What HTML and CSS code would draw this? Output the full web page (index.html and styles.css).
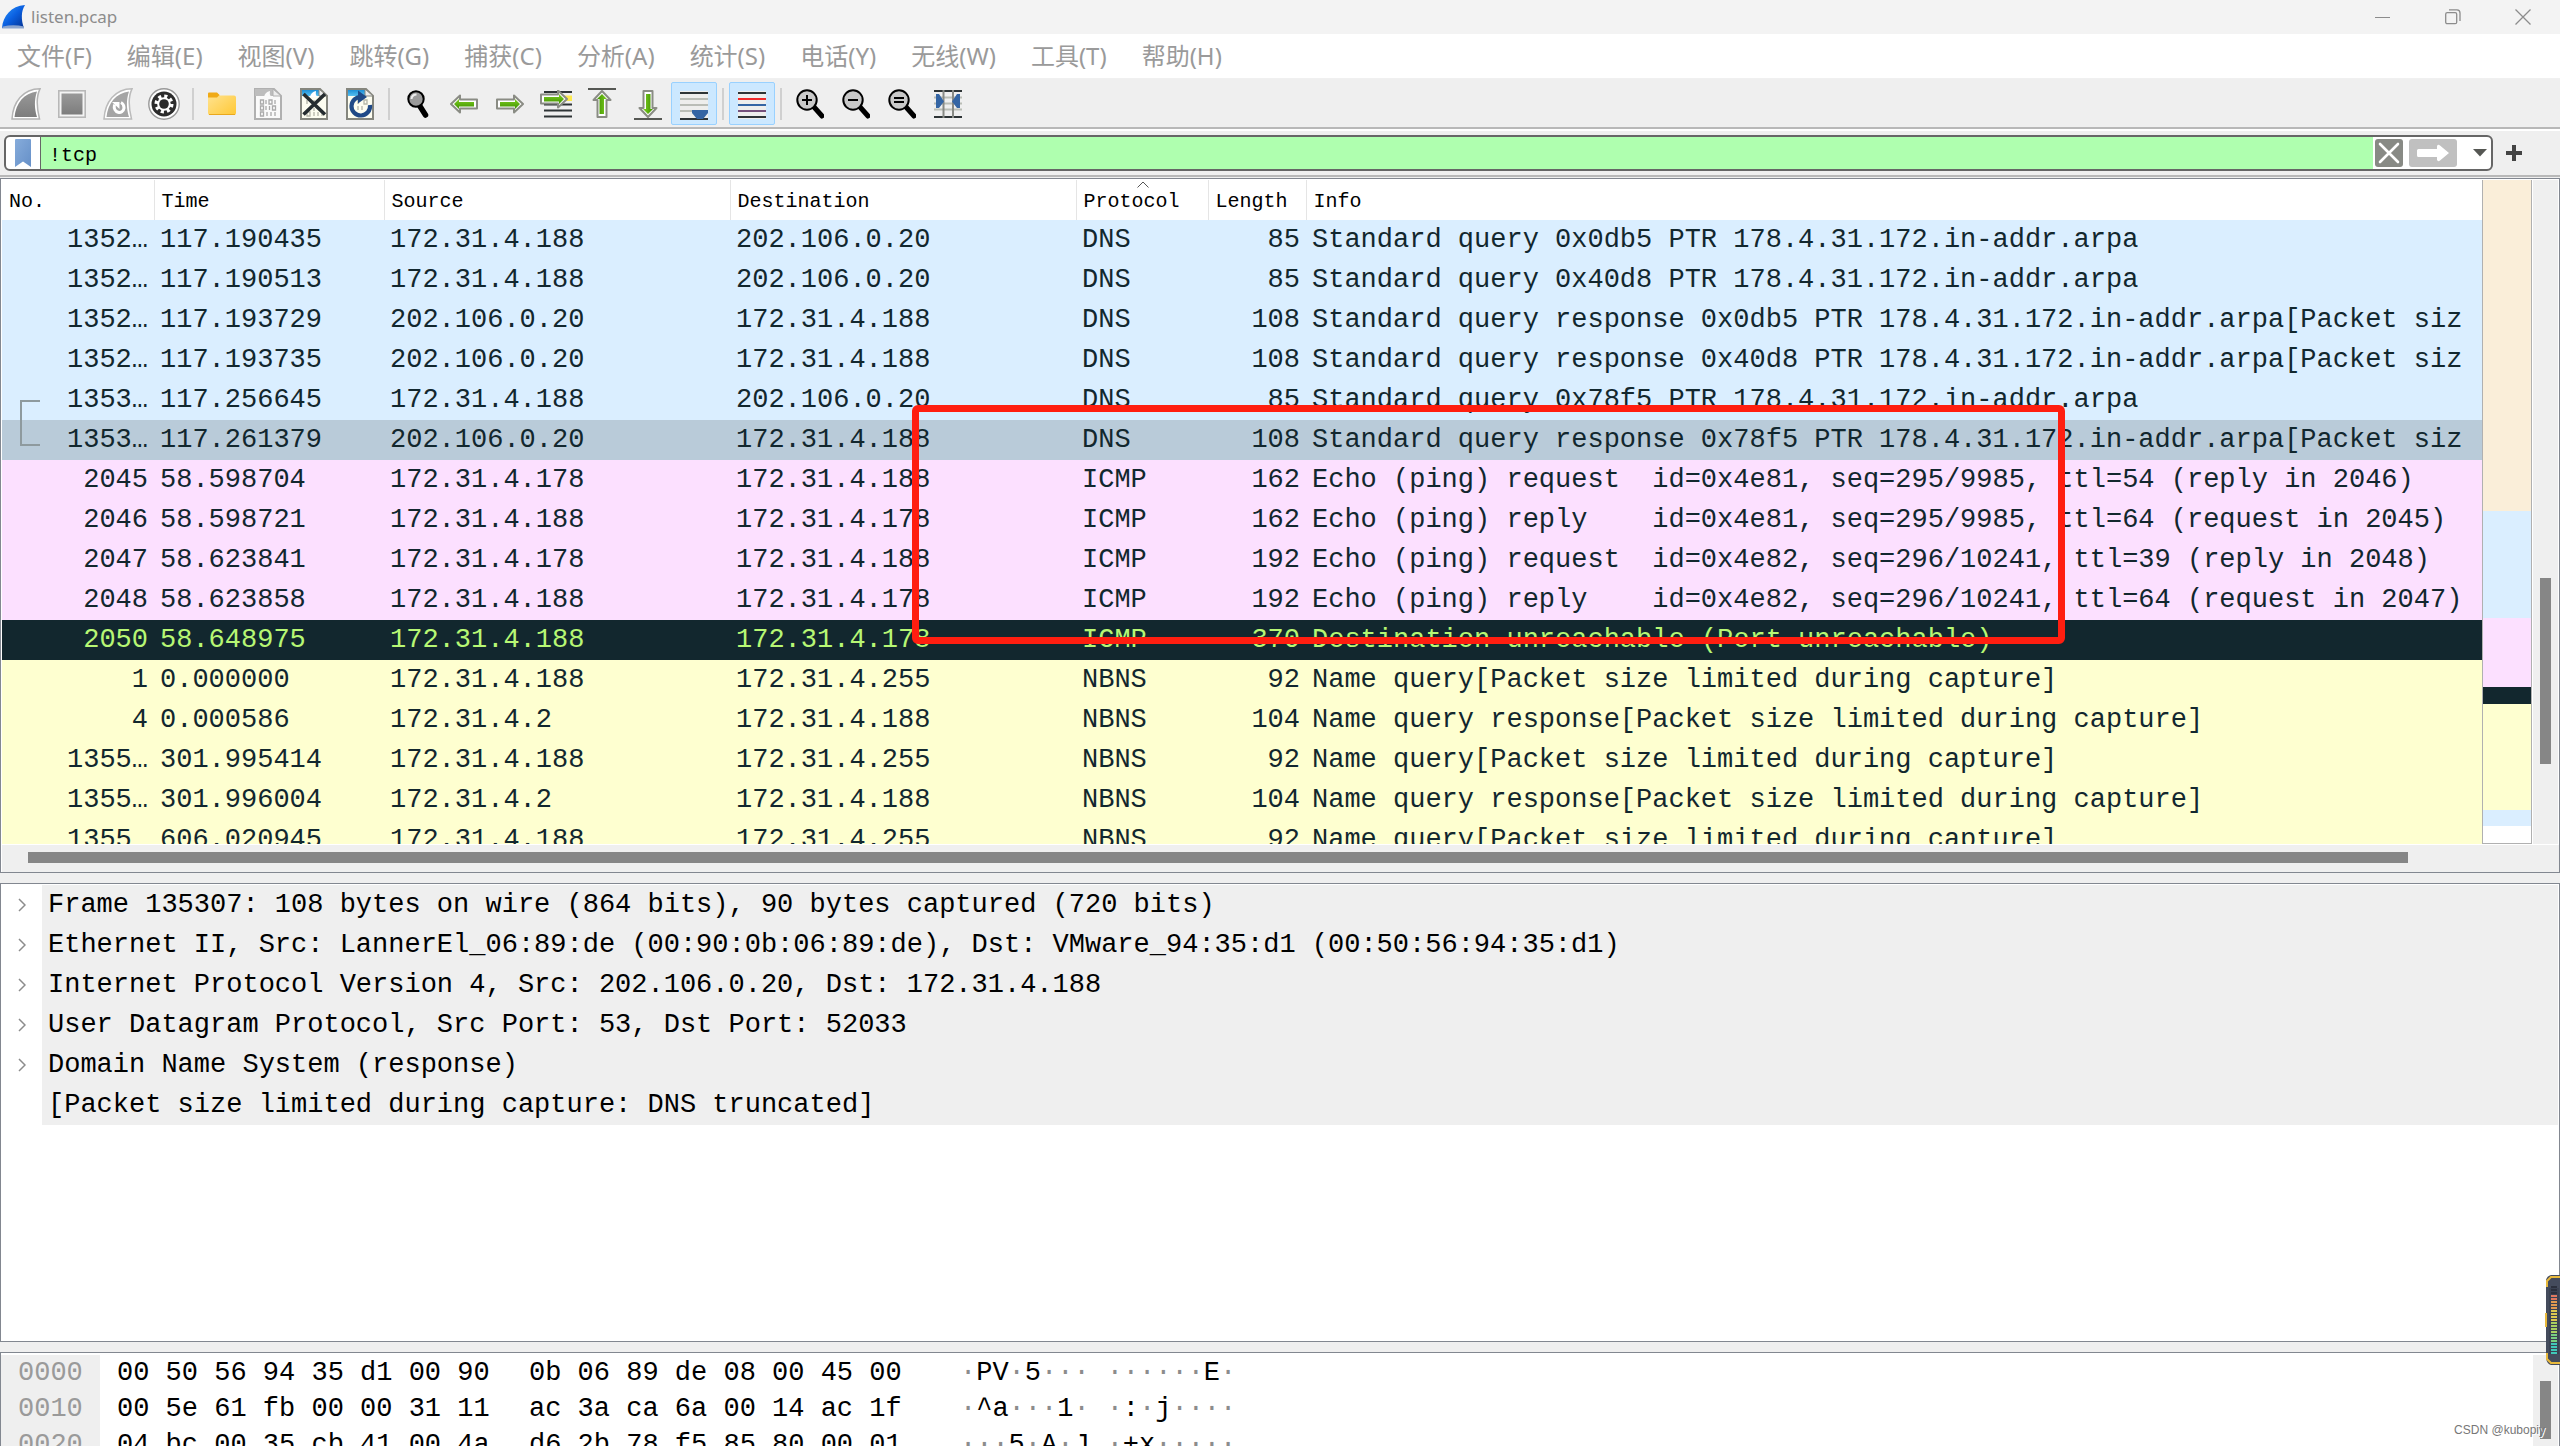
FILE: index.html
```html
<!DOCTYPE html>
<html lang="zh-CN">
<head>
<meta charset="utf-8">
<title>listen.pcap</title>
<link rel="stylesheet" href="styles.css">
</head>
<body>
<svg class="defs" width="0" height="0" aria-hidden="true">
  <defs>
    <linearGradient id="g-blue" x1="0" y1="0" x2="1" y2="1"><stop offset="0" stop-color="#2f9bff"/><stop offset=".5" stop-color="#0a5fe0"/><stop offset="1" stop-color="#04308f"/></linearGradient>
    <linearGradient id="g-grey" x1="0" y1="0" x2="0" y2="1"><stop offset="0" stop-color="#999"/><stop offset="1" stop-color="#7d7d7d"/></linearGradient>
    <linearGradient id="g-folder" x1="0" y1="0" x2="1" y2="1"><stop offset="0" stop-color="#ffe494"/><stop offset="1" stop-color="#ffc835"/></linearGradient>
    <linearGradient id="g-green" x1="0" y1="0" x2="0" y2="1"><stop offset="0" stop-color="#7fd022"/><stop offset="1" stop-color="#3f9000"/></linearGradient>
    <linearGradient id="g-mark" x1="0" y1="0" x2="1" y2="1"><stop offset="0" stop-color="#86acdb"/><stop offset="1" stop-color="#6690c8"/></linearGradient>
    <linearGradient id="g-sky" x1="0" y1="0" x2="0" y2="1"><stop offset="0" stop-color="#1d8fd6"/><stop offset="1" stop-color="#58c0f0"/></linearGradient>
    <symbol id="arrow" viewBox="0 0 28 20">
      <path d="M1 10 L10 1.500 V5.500 H27 V14.500 H10 V18.500 Z" fill="#fff" stroke="#8a8c84" stroke-width="2" stroke-linejoin="round"/>
      <path d="M4 10 L9 5 V8 H24 V12.500 H9 V15 Z" fill="url(#g-green)"/>
    </symbol>
    <symbol id="lens" viewBox="0 0 28 30">
      <path d="M18 18 L26 27" stroke="#000" stroke-width="5" stroke-linecap="round"/>
      <circle cx="11" cy="11" r="9.700" fill="#c8c8c8" stroke="#000" stroke-width="2"/>
    </symbol>
  </defs>
</svg>

<header class="titlebar">
  <svg class="app-icon" width="24" height="24" viewBox="0 0 24 24" aria-hidden="true"><path d="M0 23 C1 11 9 1 23 0 C19 6 19 15 22 23 Z" fill="url(#g-blue)"/><path d="M1 21.500 Q11 19 22 21.500 V23.500 H0 Z" fill="#8ba5cf"/></svg>
  <span class="title">listen.pcap</span>
  <div class="window-buttons">
    <button type="button" aria-label="最小化"><svg width="16" height="16" viewBox="0 0 16 16"><path d="M0 8.500 H15" stroke="#8c8c8c"/></svg></button>
    <button type="button" aria-label="还原"><svg width="16" height="16" viewBox="0 0 16 16" fill="none" stroke="#8c8c8c" stroke-width="1.300"><rect x=".7" y="3.700" width="11" height="11" rx="1.500"/><path d="M4 .8 H12 Q15 .8 15 4 V12"/></svg></button>
    <button type="button" aria-label="关闭"><svg width="16" height="16" viewBox="0 0 16 16"><path d="M.5 .5 L15.500 15.500 M15.500 .5 L.5 15.500" stroke="#8c8c8c" stroke-width="1.300"/></svg></button>
  </div>
</header>

<nav class="menubar">
  <button type="button">文件(F)</button>
  <button type="button">编辑(E)</button>
  <button type="button">视图(V)</button>
  <button type="button">跳转(G)</button>
  <button type="button">捕获(C)</button>
  <button type="button">分析(A)</button>
  <button type="button">统计(S)</button>
  <button type="button">电话(Y)</button>
  <button type="button">无线(W)</button>
  <button type="button">工具(T)</button>
  <button type="button">帮助(H)</button>
</nav>

<div class="toolbar" role="toolbar">
  <button type="button" aria-label="开始捕获"><svg width="30" height="32" viewBox="0 0 30 32"><path d="M1 31 C2 14 12 1 29 .8 C25 9 26 21 28.500 31 Z" fill="#fff" stroke="#b4b4b4" stroke-width="1.500"/><path d="M3.500 29 C5 15 13 5 26 3.500 C23 12 23.500 21 26 29 Z" fill="url(#g-grey)"/></svg></button>
  <button type="button" aria-label="停止捕获"><svg width="28" height="28" viewBox="0 0 28 28"><rect x=".8" y=".8" width="26.400" height="26.400" fill="#f4f4f4" stroke="#b8b8b8" stroke-width="1.600"/><rect x="3.500" y="3.500" width="21" height="21" fill="url(#g-grey)"/></svg></button>
  <button type="button" aria-label="重新开始"><svg width="30" height="32" viewBox="0 0 30 32"><path d="M1 31 C2 14 12 1 29 .8 C25 9 26 21 28.500 31 Z" fill="#fff" stroke="#bbb" stroke-width="1.500"/><path d="M3.500 29 C5 15 13 5 26 3.500 C23 12 23.500 21 26 29 Z" fill="#a5a5a5"/><path d="M11.500 16.500 C9.500 25 20 27.500 21 20 C21 17 20 15.500 18 14.500" fill="none" stroke="#fff" stroke-width="3"/><path d="M9 14 H16.500 V21 Z" fill="#fff"/></svg></button>
  <button type="button" aria-label="捕获选项"><svg width="32" height="32" viewBox="0 0 32 32"><circle cx="16" cy="16" r="15.200" fill="#fff" stroke="#999" stroke-width="1.400"/><circle cx="16" cy="16" r="12.500" fill="#2c2c2c"/><circle cx="16" cy="16" r="7.500" fill="none" stroke="#fff" stroke-width="4" stroke-dasharray="3 2.890"/><circle cx="16" cy="16" r="6.800" fill="#fff"/><circle cx="16" cy="16" r="4.800" fill="#2c2c2c"/></svg></button>
  <span class="sep"></span>
  <button type="button" aria-label="打开"><svg width="28" height="24" viewBox="0 0 28 24"><path d="M0 2 Q0 1 1 1 H9 L12 3.500 H26 Q28 3.500 28 5.500 V21 Q28 23 26 23 H2 Q0 23 0 21 Z" fill="url(#g-folder)"/><path d="M0 5 V1.500 Q0 .5 1 .5 H9 L11.500 3 L9 5.500 H0 Z" fill="#f0aa16"/><path d="M1 22.500 H27" stroke="#e9a81e"/></svg></button>
  <button type="button" aria-label="保存"><svg width="28" height="32" viewBox="0 0 28 32"><path d="M1 1 H20 L27 8 V31 H1 Z" fill="#fafafa" stroke="#b0b0b0" stroke-width="2"/><path d="M1 1 H20 L23 8 H1 Z" fill="#bdbdbd"/><path d="M10 9 Q11 4 16 3 Q15 6 17 9 Z" fill="#fafafa"/><path d="M19 1 V8 H27 Z" fill="#eee" stroke="#b0b0b0"/><g fill="none" stroke="#aaa" stroke-width="1.300"><path d="M6.500 12 h3 v4 h-3 z M12 12 v4 M15 12 h3 v4 h-3 z M21 12 v4 M6.500 18 h3 v4 h-3 z M12 18 v4 M15.500 18 v4 M18.500 18 h3 v4 h-3 z M6.500 24 h3 v4 h-3 z M13 24 v4 M17 24 v4 M21 24 v4"/></g></svg></button>
  <button type="button" aria-label="关闭文件"><svg width="28" height="32" viewBox="0 0 28 32"><path d="M1 1 H20 L27 8 V31 H1 Z" fill="#fdfdf0" stroke="#85867e" stroke-width="2"/><path d="M2 2 H20 L23 8 H2 Z" fill="url(#g-sky)"/><path d="M10 9 Q11 4 16 3 Q15 6 17 9 Z" fill="#fff"/><path d="M19 1 V8 H27 Z" fill="#eee" stroke="#85867e"/><path d="M7 24 h3 v4 h-3 z M14 24 v4 M18 24 v4 M22 24 v4 M7 12 v4 M14 12 v3 M14 20 v3" fill="none" stroke="#b5b6a8" stroke-width="1.300"/><path d="M3.500 6 L25 26.500 M25 6 L3.500 26.500" stroke="#262d30" stroke-width="3.600"/></svg></button>
  <button type="button" aria-label="重新加载"><svg width="28" height="32" viewBox="0 0 28 32"><path d="M1 1 H20 L27 8 V31 H1 Z" fill="#fdfdf0" stroke="#85867e" stroke-width="2"/><path d="M2 2 H20 L23 8 H2 Z" fill="url(#g-sky)"/><path d="M19 1 V8 H27 Z" fill="#eee" stroke="#85867e"/><path d="M7 12 v4 M12 12 v4 M18 12 h3 v4 h-3 z M12 18 v4 M16 18 v4" fill="none" stroke="#b5b6a8" stroke-width="1.300"/><path d="M16 9 A9.300 9.300 0 1 0 24 17" fill="none" stroke="#204a87" stroke-width="4.200"/><path d="M12 2.500 L21 9 L12 15.500 Z" fill="#204a87"/></svg></button>
  <span class="sep"></span>
  <button type="button" aria-label="查找分组"><svg width="22" height="28" viewBox="0 0 22 28"><path d="M12.500 15.500 L18.500 25" stroke="#000" stroke-width="5.500" stroke-linecap="round"/><circle cx="9" cy="9" r="7.700" fill="#9b9b9b" stroke="#000" stroke-width="2"/><path d="M4.500 9 Q5 4.500 9.500 4.500" fill="none" stroke="#eee" stroke-width="2"/></svg></button>
  <button type="button" aria-label="上一分组"><svg width="28" height="20"><use href="#arrow"/></svg></button>
  <button type="button" aria-label="下一分组"><svg width="28" height="20" viewBox="0 0 28 20"><use href="#arrow" width="28" height="20" transform="matrix(-1 0 0 1 28 0)"/></svg></button>
  <button type="button" aria-label="转到分组"><svg width="32" height="28" viewBox="0 0 32 28"><path d="M4 2 H32 M4 14.500 H32 M4 20.500 H32 M4 26.500 H32" stroke="#2e3436" stroke-width="2"/><path d="M20 5.500 H32 V11 H20 Z" fill="#fce94f"/><use href="#arrow" width="28" height="20" transform="matrix(-1 0 0 1 28 -1)"/></svg></button>
  <button type="button" aria-label="首个分组"><svg width="28" height="32" viewBox="0 0 28 32"><path d="M0 1 H28" stroke="#555753" stroke-width="2"/><use href="#arrow" width="28" height="20" transform="matrix(0 1 -1 0 24 2)"/></svg></button>
  <button type="button" aria-label="最新分组"><svg width="28" height="32" viewBox="0 0 28 32"><path d="M0 31 H28" stroke="#555753" stroke-width="2"/><use href="#arrow" width="28" height="20" transform="matrix(0 -1 1 0 4 30)"/></svg></button>
  <button type="button" class="checked" aria-pressed="true" aria-label="自动滚动"><svg width="28" height="32" viewBox="0 0 28 32"><rect y="3" width="28" height="28" fill="#eeeeec"/><path d="M0 5 H28 M0 31 H28" stroke="#2e3436" stroke-width="2"/><path d="M0 11 H28 M0 17 H28 M0 23 H28" stroke="#babdb6" stroke-width="2"/><path d="M12 22 H28 V25 L23 31 H17 L12 25 Z" fill="#3465a4"/></svg></button>
  <span class="sep"></span>
  <button type="button" class="checked" aria-pressed="true" aria-label="着色"><svg width="28" height="32" viewBox="0 0 28 32"><rect y="3" width="28" height="28" fill="#eeeeec"/><path d="M0 5 H28 M0 29 H28" stroke="#2e3436" stroke-width="2"/><path d="M0 11 H28" stroke="#ef2929" stroke-width="2"/><path d="M0 17 H28" stroke="#3465a4" stroke-width="2"/><path d="M0 23 H28" stroke="#75507b" stroke-width="2"/></svg></button>
  <span class="sep"></span>
  <button type="button" aria-label="放大"><svg width="28" height="30" viewBox="0 0 28 30"><use href="#lens"/><path d="M6 11 H16 M11 6 V16" stroke="#000" stroke-width="2"/></svg></button>
  <button type="button" aria-label="缩小"><svg width="28" height="30" viewBox="0 0 28 30"><use href="#lens"/><path d="M6 11 H16" stroke="#000" stroke-width="2"/></svg></button>
  <button type="button" aria-label="普通大小"><svg width="28" height="30" viewBox="0 0 28 30"><use href="#lens"/><path d="M6 9 H16 M6 13 H16" stroke="#000" stroke-width="2"/></svg></button>
  <button type="button" aria-label="调整列宽"><svg width="28" height="28" viewBox="0 0 28 28"><path d="M0 7.500 H28 M0 13.500 H28 M0 19.500 H28" stroke="#babdb6" stroke-width="2"/><path d="M0 1 H28 M0 27 H28" stroke="#2e3436" stroke-width="2"/><path d="M9.500 0 V28 M19 0 V28" stroke="#888a85" stroke-width="2"/><path d="M2 4 L5 4 L10 11.500 L5 18 L2 18 Z M26 4 L23 4 L18 11.500 L23 18 L26 18 Z" fill="#3465a4"/></svg></button>
</div>

<form class="filterbar" onsubmit="return false">
  <div class="filter-box">
    <button type="button" class="bookmark" aria-label="书签"><svg width="16" height="28" viewBox="0 0 16 28"><path d="M0 1 Q0 0 1 0 H15 Q16 0 16 1 V28 L8 22.500 L0 28 Z" fill="url(#g-mark)"/></svg></button>
    <input type="text" class="filter-input" value="!tcp" aria-label="显示过滤器" spellcheck="false">
    <button type="button" aria-label="清除"><svg width="28" height="28" viewBox="0 0 28 28"><rect width="28" height="28" rx="3" fill="#888a85"/><path d="M5 5 L23 23 M23 5 L5 23" stroke="#fff" stroke-width="2.600" stroke-linecap="round"/></svg></button>
    <button type="submit" aria-label="应用"><svg width="48" height="28" viewBox="0 0 48 28"><rect width="48" height="28" rx="3" fill="#c0c0c0"/><path d="M8 11.500 Q8 10 9.500 10 H28 V7 Q29 5 31 6.500 L40 14 L31 21.500 Q29 23 28 21 V18 H9.500 Q8 18 8 16.500 Z" fill="#fff"/></svg></button>
    <button type="button" class="history" aria-label="历史"><svg width="14" height="8" viewBox="0 0 14 8"><path d="M0 0 H14 L7 7.500 Z" fill="#555753"/></svg></button>
  </div>
  <button type="button" class="add" aria-label="添加"><svg width="16" height="16" viewBox="0 0 16 16"><path d="M8 0 V16 M0 8 H16" stroke="#444" stroke-width="4"/></svg></button>
</form>

<main class="panes">
  <section class="pane packets">
    <div class="packet-view">
      <table class="packet-table">
        <colgroup><col class="c-no"><col class="c-time"><col class="c-addr"><col class="c-addr"><col class="c-proto"><col class="c-len"><col></colgroup>
        <thead><tr><th>No.</th><th>Time</th><th>Source</th><th>Destination</th><th class="sorted">Protocol<svg class="sort" width="12" height="7" viewBox="0 0 12 7"><path d="M.5 6.500 L6 1 L11.500 6.500" fill="none" stroke="#555"/></svg></th><th>Length</th><th>Info</th></tr></thead>
        <tbody>
          <tr class="dns"><td>1352…</td><td>117.190435</td><td>172.31.4.188</td><td>202.106.0.20</td><td>DNS</td><td>85</td><td>Standard query 0x0db5 PTR 178.4.31.172.in-addr.arpa</td></tr>
          <tr class="dns"><td>1352…</td><td>117.190513</td><td>172.31.4.188</td><td>202.106.0.20</td><td>DNS</td><td>85</td><td>Standard query 0x40d8 PTR 178.4.31.172.in-addr.arpa</td></tr>
          <tr class="dns"><td>1352…</td><td>117.193729</td><td>202.106.0.20</td><td>172.31.4.188</td><td>DNS</td><td>108</td><td>Standard query response 0x0db5 PTR 178.4.31.172.in-addr.arpa[Packet siz</td></tr>
          <tr class="dns"><td>1352…</td><td>117.193735</td><td>202.106.0.20</td><td>172.31.4.188</td><td>DNS</td><td>108</td><td>Standard query response 0x40d8 PTR 178.4.31.172.in-addr.arpa[Packet siz</td></tr>
          <tr class="dns"><td class="related">1353…</td><td>117.256645</td><td>172.31.4.188</td><td>202.106.0.20</td><td>DNS</td><td>85</td><td>Standard query 0x78f5 PTR 178.4.31.172.in-addr.arpa</td></tr>
          <tr class="dns selected"><td>1353…</td><td>117.261379</td><td>202.106.0.20</td><td>172.31.4.188</td><td>DNS</td><td>108</td><td>Standard query response 0x78f5 PTR 178.4.31.172.in-addr.arpa[Packet siz</td></tr>
          <tr class="icmp"><td>2045</td><td>58.598704</td><td>172.31.4.178</td><td>172.31.4.188</td><td>ICMP</td><td>162</td><td>Echo (ping) request  id=0x4e81, seq=295/9985, ttl=54 (reply in 2046)</td></tr>
          <tr class="icmp"><td>2046</td><td>58.598721</td><td>172.31.4.188</td><td>172.31.4.178</td><td>ICMP</td><td>162</td><td>Echo (ping) reply    id=0x4e81, seq=295/9985, ttl=64 (request in 2045)</td></tr>
          <tr class="icmp"><td>2047</td><td>58.623841</td><td>172.31.4.178</td><td>172.31.4.188</td><td>ICMP</td><td>192</td><td>Echo (ping) request  id=0x4e82, seq=296/10241, ttl=39 (reply in 2048)</td></tr>
          <tr class="icmp"><td>2048</td><td>58.623858</td><td>172.31.4.188</td><td>172.31.4.178</td><td>ICMP</td><td>192</td><td>Echo (ping) reply    id=0x4e82, seq=296/10241, ttl=64 (request in 2047)</td></tr>
          <tr class="error"><td>2050</td><td>58.648975</td><td>172.31.4.188</td><td>172.31.4.178</td><td>ICMP</td><td>370</td><td>Destination unreachable (Port unreachable)</td></tr>
          <tr class="nbns"><td>1</td><td>0.000000</td><td>172.31.4.188</td><td>172.31.4.255</td><td>NBNS</td><td>92</td><td>Name query[Packet size limited during capture]</td></tr>
          <tr class="nbns"><td>4</td><td>0.000586</td><td>172.31.4.2</td><td>172.31.4.188</td><td>NBNS</td><td>104</td><td>Name query response[Packet size limited during capture]</td></tr>
          <tr class="nbns"><td>1355…</td><td>301.995414</td><td>172.31.4.188</td><td>172.31.4.255</td><td>NBNS</td><td>92</td><td>Name query[Packet size limited during capture]</td></tr>
          <tr class="nbns"><td>1355…</td><td>301.996004</td><td>172.31.4.2</td><td>172.31.4.188</td><td>NBNS</td><td>104</td><td>Name query response[Packet size limited during capture]</td></tr>
          <tr class="nbns"><td>1355…</td><td>606.020945</td><td>172.31.4.188</td><td>172.31.4.255</td><td>NBNS</td><td>92</td><td>Name query[Packet size limited during capture]</td></tr>
        </tbody>
      </table>
      <div class="highlight"></div>
    </div>
    <div class="minimap"></div>
    <div class="vscroll"><div class="vthumb packets-thumb"></div></div>
    <div class="hscroll"><div class="hthumb"></div></div>
  </section>

  <section class="pane details">
    <ul class="tree">
      <li><button type="button" aria-label="展开"><svg width="8" height="14" viewBox="0 0 8 14"><path d="M1 1 L7 7 L1 13" fill="none" stroke="#8c8c8c" stroke-width="1.500"/></svg></button><span>Frame 135307: 108 bytes on wire (864 bits), 90 bytes captured (720 bits)</span></li>
      <li><button type="button" aria-label="展开"><svg width="8" height="14" viewBox="0 0 8 14"><path d="M1 1 L7 7 L1 13" fill="none" stroke="#8c8c8c" stroke-width="1.500"/></svg></button><span>Ethernet II, Src: LannerEl_06:89:de (00:90:0b:06:89:de), Dst: VMware_94:35:d1 (00:50:56:94:35:d1)</span></li>
      <li><button type="button" aria-label="展开"><svg width="8" height="14" viewBox="0 0 8 14"><path d="M1 1 L7 7 L1 13" fill="none" stroke="#8c8c8c" stroke-width="1.500"/></svg></button><span>Internet Protocol Version 4, Src: 202.106.0.20, Dst: 172.31.4.188</span></li>
      <li><button type="button" aria-label="展开"><svg width="8" height="14" viewBox="0 0 8 14"><path d="M1 1 L7 7 L1 13" fill="none" stroke="#8c8c8c" stroke-width="1.500"/></svg></button><span>User Datagram Protocol, Src Port: 53, Dst Port: 52033</span></li>
      <li><button type="button" aria-label="展开"><svg width="8" height="14" viewBox="0 0 8 14"><path d="M1 1 L7 7 L1 13" fill="none" stroke="#8c8c8c" stroke-width="1.500"/></svg></button><span>Domain Name System (response)</span></li>
      <li><i></i><span>[Packet size limited during capture: DNS truncated]</span></li>
    </ul>
  </section>

  <section class="pane bytes">
    <div class="hexdump">
      <div class="hexrow"><span class="offset">0000</span><span class="hex">00 50 56 94 35 d1 00 90</span><span class="hex">0b 06 89 de 08 00 45 00</span><span class="ascii"><span><s>·</s>PV<s>·</s>5<s>···</s></span><span><s>······</s>E<s>·</s></span></span></div>
      <div class="hexrow"><span class="offset">0010</span><span class="hex">00 5e 61 fb 00 00 31 11</span><span class="hex">ac 3a ca 6a 00 14 ac 1f</span><span class="ascii"><span><s>·</s>^a<s>···</s>1<s>·</s></span><span><s>·</s>:<s>·</s>j<s>····</s></span></span></div>
      <div class="hexrow"><span class="offset">0020</span><span class="hex">04 bc 00 35 cb 41 00 4a</span><span class="hex">d6 2b 78 f5 85 80 00 01</span><span class="ascii"><span><s>···</s>5<s>·</s>A<s>·</s>J</span><span><s>·</s>+x<s>·····</s></span></span></div>
    </div>
    <div class="vscroll"><div class="vthumb bytes-thumb"></div></div>
  </section>
</main>

<svg class="meter" width="16" height="92" viewBox="0 0 16 92" aria-hidden="true">
  <path d="M16 1 H7 Q3 2 2 6 V84 Q3 90 7 91 H16 Z" fill="#444b5c"/>
  <path d="M16 3 H7 L3 7 V13 M2 39 V53 M3 79 V85 L7 89 H16" fill="none" stroke="#e8b93c" stroke-width="2"/>
  <path d="M10 14 V80" stroke="#2f3544" stroke-width="10" opacity=".4"/>
  <g fill="none" stroke-width="6" stroke-dasharray="2 1"><path d="M10 12 V20" stroke="#2b303d"/><path d="M10 21 V26" stroke="#e07860"/><path d="M10 27 V35" stroke="#e09a50"/><path d="M10 36 V47" stroke="#dcc850"/><path d="M10 48 V59" stroke="#a8d060"/><path d="M10 60 V68" stroke="#78d080"/><path d="M10 69 V80" stroke="#40c8b8"/></g>
</svg>
<div class="watermark">CSDN @kubopiy</div>
</body>
</html>
```
FILE: styles.css
```css
* { box-sizing: border-box; }

body {
  margin: 0;
  height: 100vh;
  overflow: hidden;
  position: relative;
  display: flex;
  flex-direction: column;
  background: #efefef;
  font-family: "Noto Sans", "Noto Sans CJK SC", sans-serif;
  color: #000;
}

button {
  border: 0;
  padding: 0;
  margin: 0;
  background: none;
  font: inherit;
  color: inherit;
  display: flex;
  align-items: center;
  justify-content: center;
}

svg { display: block; flex: none; }
.defs { position: absolute; }

/* title bar */
.titlebar {
  flex: none;
  height: 34px;
  display: flex;
  align-items: center;
  gap: 5px;
  padding: 0 2px;
  background: #f3f3f3;
}
.title { font-size: 17px; line-height: 24px; color: #8c8c8c; }
.window-buttons { display: flex; margin-left: auto; height: 100%; }
.window-buttons button { width: 70px; }

/* menu bar */
.menubar {
  flex: none;
  height: 45px;
  display: flex;
  align-items: center;
  gap: 1px;
  background: #fff;
  border-bottom: 1px solid #f0f0f0;
  font-size: 24px;
  line-height: 36px;
  color: #9a9a9a;
}
.menubar button { padding: 0 17px; }

/* tool bar */
.toolbar {
  flex: none;
  height: 50px;
  display: flex;
  align-items: center;
  padding: 1px 3px 0;
  border-bottom: 2px solid #b8b8b8;
}
.toolbar button { width: 46px; height: 43px; }
.toolbar .checked { background: #cce8ff; border: 1px solid #99d1ff; border-radius: 2px; }
.sep { width: 2px; height: 32px; margin: 0 5px; background: #d0d0d0; }

/* display filter */
.filterbar {
  flex: none;
  height: 48px;
  display: flex;
  align-items: center;
  padding: 0 38px 0 4px;
  gap: 13px;
  border-top: 2px solid #fff;
  border-bottom: 2px solid #b8b8b8;
}
.filter-box {
  flex: 1;
  height: 36px;
  display: flex;
  align-items: center;
  gap: 6px;
  border: 2px solid #666;
  border-radius: 6px;
  background: #fff;
  overflow: hidden;
}
.bookmark { width: 35px; height: 100%; border-right: 1px solid #666; margin-right: -6px; }
.filter-input {
  flex: 1;
  min-width: 0;
  height: 100%;
  margin-right: -4px;
  padding: 4px 8px 0;
  border: 0;
  outline: 0;
  background: #afffaf;
  font: 20px "Liberation Mono", monospace;
  color: #000;
}
.history { width: 28px; padding-left: 6px; }

/* panes */
.panes {
  flex: 1;
  min-height: 0;
  display: grid;
  grid-template-rows: minmax(0, 696fr) minmax(0, 459fr) minmax(0, 94fr);
  gap: 10px;
  padding-top: 1px;
  font: 27px/40px "Liberation Mono", monospace;
}
.pane { border: 1px solid #828790; background: #fff; overflow: hidden; }

.packets {
  display: grid;
  grid-template: minmax(0, 1fr) 28px / minmax(0, 1fr) 50px 27px;
  padding: 1px 0 0 1px;
}
.packet-view { position: relative; overflow: hidden; }
.packet-table { width: 100%; table-layout: fixed; border-collapse: collapse; color: #12272e; }
.c-no { width: 152px; }
.c-time { width: 230px; }
.c-addr { width: 346px; }
.c-proto { width: 132px; }
.c-len { width: 98px; }
.packet-table th {
  position: relative;
  height: 40px;
  padding: 4px 7px 0;
  border-right: 1px solid #e5e5e5;
  font-size: 20px;
  line-height: 36px;
  font-weight: 400;
  text-align: left;
  color: #000;
}
.packet-table th:last-child { border-right: 0; }
.sort { position: absolute; top: 1px; left: 60px; }
.packet-table td { height: 40px; padding: 0 6px; white-space: pre; overflow: hidden; }
.packet-table td:nth-child(1), .packet-table td:nth-child(6) { text-align: right; }
.dns { background: #daeeff; }
.selected { background: #b9cbd9; }
.icmp { background: #fce0ff; }
.error { background: #12272e; color: #b7f774; }
.nbns { background: #feffd0; }
.packet-table .related { position: relative; overflow: visible; }
.related::before {
  content: "";
  position: absolute;
  left: 18px;
  top: 20px;
  width: 18px;
  height: 42px;
  border: 2px solid #8e9a9e;
  border-right: 0;
}
.highlight {
  position: absolute;
  left: 910px;
  top: 225px;
  width: 1153px;
  height: 239px;
  border: 7px solid #ff1e10;
  border-radius: 6px;
}
.minimap {
  border: 1px solid #b0b0b0;
  border-top: 0;
  background: linear-gradient(#faeed9 50%, #daeeff 50% 66%, #fce0ff 66% 76.5%, #12272e 76.5% 79%, #feffd0 79% 95%, #daeeff 95% 97.5%, #fff 97.5%);
}
.vscroll { background: #efefef; border: 1px solid #fff; border-width: 0 1px; }
.vthumb { width: 11px; margin: 0 auto; background: #868686; }
.packets-thumb { margin-top: 398px; height: 186px; }
.hscroll { grid-column: 1 / -1; background: #efefef; padding: 7px 151px 0 26px; border-top: 1px solid #fff; }
.hthumb { height: 11px; background: #868686; }

/* packet details */
.tree { list-style: none; margin: 0; padding: 1px 1px 0 0; }
.tree li { display: flex; }
.tree button, .tree i { flex: none; width: 41px; height: 40px; }
.tree span { flex: 1; padding-left: 6px; background: #efefef; white-space: pre; }

/* packet bytes */
.bytes { display: grid; grid-template-columns: minmax(0, 1fr) 27px; padding-top: 2px; border-bottom: 0; line-height: 36px; }
.hexrow { display: grid; grid-template-columns: 99px 412px 431px 1fr; white-space: pre; }
.offset { padding-left: 17px; background: #efefef; color: #9a9a9a; }
.hex { padding-left: 17px; }
.ascii { display: flex; gap: 17px; padding-left: 17px; }
.ascii s { text-decoration: none; color: #8c8c8c; }
.bytes-thumb { margin-top: 26px; height: 58px; }

/* overlays */
.meter { position: absolute; right: 0; bottom: 80px; }
.watermark {
  position: absolute;
  right: 15px;
  bottom: 6px;
  font: 12px/20px "Liberation Sans", sans-serif;
  color: #777;
  text-shadow: 1px 1px 0 #fff;
}
```
